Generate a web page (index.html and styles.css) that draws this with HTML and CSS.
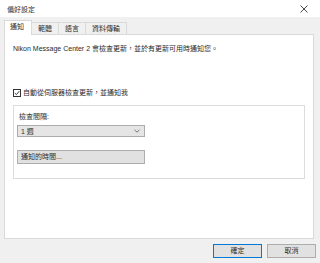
FILE: index.html
```html
<!DOCTYPE html>
<html lang="en">
<head>
    <meta charset="UTF-8">
    <title>偏好設定</title>
    <link rel="stylesheet" href="styles.css">
</head>
<body>
    <div class="titlebar">
        <span class="title">偏好設定</span>
        <svg class="close" width="8" height="8" viewBox="0 0 8 8">
            <path d="M0.5 0.5 L7.5 7.5 M7.5 0.5 L0.5 7.5" stroke="#333" stroke-width="0.9" fill="none"/>
        </svg>
    </div>

    <div class="window">
        <div class="tabs">
            <div class="tab active">通知</div>
            <div class="tab">範體</div>
            <div class="tab">語言</div>
            <div class="tab">資料傳輸</div>
        </div>

        <div class="panel">
            <p class="intro">Nikon Message Center 2 會檢查更新，並於有更新可用時通知您。</p>

            <label class="check">
                <span class="box">
                    <svg width="6" height="6" viewBox="0 0 6 6">
                        <path d="M0.8 3.1 L2.4 4.6 L5.3 1.2" stroke="#222" stroke-width="0.9" fill="none"/>
                    </svg>
                </span>
                自動從伺服器檢查更新，並通知我
            </label>

            <div class="group">
                <div class="field-label">檢查間隔:</div>
                <div class="select">
                    <span>1 週</span>
                    <svg width="6" height="4" viewBox="0 0 6 4">
                        <path d="M0.5 0.8 L3 3.2 L5.5 0.8" stroke="#555" stroke-width="0.8" fill="none"/>
                    </svg>
                </div>
                <div class="btn wide">通知的時間...</div>
            </div>
        </div>

        <div class="footer">
            <div class="btn primary">確定</div>
            <div class="btn">取消</div>
        </div>
    </div>
</body>
</html>
```

FILE: styles.css
```css
body {
    margin: 0;
    width: 320px;
    height: 263px;
    background: #f0f0f0;
    font-family: "Liberation Sans", "Noto Sans CJK TC", sans-serif;
    font-size: 7px;
    color: #2b2b2b;
    overflow: hidden;
}
.titlebar {
    height: 17px;
    background: #fff;
    display: flex;
    align-items: center;
    justify-content: space-between;
    padding: 0 12px 0 7px;
}
.title {
    color: #333;
}
.window {
    padding: 4px 6px 0 4px;
}
.tabs {
    display: flex;
    align-items: flex-end;
    height: 13px;
    position: relative;
    z-index: 1;
}
.tab {
    height: 11px;
    line-height: 11px;
    padding: 0 6px;
    border: 1px solid #d9d9d9;
    border-bottom: none;
    margin-left: -1px;
    background: #f0f0f0;
}
.tab.active {
    height: 14px;
    line-height: 12px;
    margin-left: 0;
    margin-bottom: -1px;
    background: #fff;
    padding: 0 7px 0 5px;
}
.panel {
    height: 203px;
    background: #fff;
    border: 1px solid #d9d9d9;
    padding: 0 8px 0 8px;
}
.intro {
    margin: 9px 0 0 0;
    line-height: 9px;
}
.check {
    display: flex;
    align-items: center;
    gap: 2px;
    margin-top: 36px;
    line-height: 8px;
}
.box {
    width: 6px;
    height: 6px;
    border: 1px solid #333;
    display: flex;
    align-items: center;
    justify-content: center;
}
.group {
    margin-top: 8px;
    height: 72px;
    border: 1px solid #dcdcdc;
    padding: 0 3px;
}
.field-label {
    margin: 7px 0 0 2px;
    line-height: 8px;
}
.select {
    margin-top: 4px;
    width: 119px;
    height: 10px;
    background: #e5e5e5;
    border: 1px solid #acacac;
    display: flex;
    align-items: center;
    justify-content: space-between;
    padding: 0 4px 0 3px;
}
.btn {
    height: 12px;
    line-height: 12px;
    background: #e1e1e1;
    border: 1px solid #adadad;
    text-align: center;
}
.btn.wide {
    margin-top: 13px;
    width: 120px;
    text-align: left;
    padding: 0 3px;
}
.footer {
    display: flex;
    justify-content: flex-end;
    gap: 5px;
    margin-top: 5px;
    margin-right: -2px;
}
.footer .btn {
    width: 47px;
}
.btn.primary {
    border-color: #0078d7;
}
```
